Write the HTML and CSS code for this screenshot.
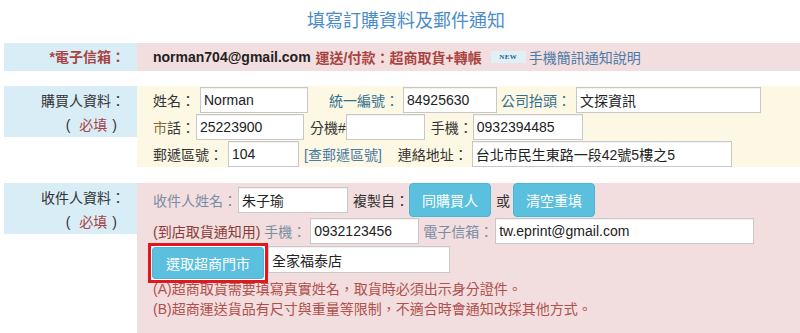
FILE: index.html
```html
<!DOCTYPE html>
<html lang="zh-Hant">
<head>
<meta charset="utf-8">
<title>填寫訂購資料及郵件通知</title>
<link rel="stylesheet" href="styles.css">
</head>
<body>
<div class="page">
  <h1 class="title">填寫訂購資料及郵件通知</h1>

  <div class="row row-email">
    <div class="label label-strong">*電子信箱：</div>
    <div class="cell cell-danger cell-email">
      <b class="email">norman704@gmail.com</b>
      <b class="ship">運送/付款：超商取貨+轉帳</b>
      <span class="new">NEW</span>
      <a class="link sms">手機簡訊通知說明</a>
    </div>
  </div>

  <div class="row">
    <div class="label label-block">購買人資料：<br><span class="must">(<span class="req">必填</span>)</span></div>
    <div class="cell cell-warning">
      <div class="line">
        <span class="lab">姓名：</span><input class="inp w-name" value="Norman">
        <span class="lab info gap21">統一編號：</span><input class="inp w-tax" value="84925630">
        <span class="lab info gap4">公司抬頭：</span><input class="inp w-co" value="文探資訊">
      </div>
      <div class="line">
        <span class="lab"><span class="warn">市</span>話：</span><input class="inp w-tel" value="25223900">
        <span class="lab gap6">分機#</span><input class="inp w-ext" value="">
        <span class="lab gap6">手機：</span><input class="inp w-mob" value="0932394485">
      </div>
      <div class="line">
        <span class="lab">郵遞區號：</span><input class="inp w-zip" value="104">
        <a class="link gap5">[查郵遞區號]</a>
        <span class="lab gap16">連絡地址：</span><input class="inp w-addr" value="台北市民生東路一段42號5樓之5">
      </div>
    </div>
  </div>

  <div class="row">
    <div class="label label-block">收件人資料：<br><span class="must">(<span class="req">必填</span>)</span></div>
    <div class="cell cell-danger cell-recv">
      <div class="line line-btn">
        <span class="lab muted">收件人姓名：</span><input class="inp w-rname" value="朱子瑜">
        <span class="lab gap5">複製自：</span><button class="btn">同購買人</button>
        <span class="lab gap5 or">或</span><button class="btn">清空重填</button>
      </div>
      <div class="line line-2">
        <span class="lab"><span class="brown">(到店取貨通知用)</span> <span class="muted">手機：</span></span><input class="inp w-rmob" value="0932123456">
        <span class="lab muted gap4">電子信箱：</span><input class="inp w-rmail" value="tw.eprint@gmail.com">
      </div>
      <div class="line line-3">
        <span class="store-frame"><button class="btn btn-store">選取超商門市</button></span><input class="inp w-store" value="全家福泰店">
      </div>
      <p class="note">(A)超商取貨需要填寫真實姓名，取貨時必須出示身分證件。</p>
      <p class="note">(B)超商運送貨品有尺寸與重量等限制，不適合時會通知改採其他方式。</p>
    </div>
  </div>
</div>
</body>
</html>
```

FILE: styles.css
```css
* { box-sizing: border-box; }
html, body { margin: 0; padding: 0; background: #fff; }
body {
  font-family: "Liberation Sans", "Noto Sans CJK TC", sans-serif;
  font-size: 14px;
  color: #333;
  overflow: hidden;
}
.page { padding-left: 4px; width: 804px; }
.title {
  margin: 0;
  height: 43px;
  line-height: 43px;
  text-align: center;
  font-size: 18px;
  font-weight: normal;
  color: #4a8cc8;
  padding-left: 4px;
}
.row { display: flex; align-items: flex-start; margin-bottom: 15px; }
.row + .row { margin-bottom: 16px; }
.label {
  width: 133px;
  flex: none;
  background: #d9edf7;
  text-align: right;
  padding-right: 12px;
  color: #333;
}
.label-strong {
  height: 28px;
  line-height: 28px;
  color: #a94442;
  font-weight: bold;
}
.label-block { padding-top: 3px; line-height: 24px; }
.must { display: inline-block; margin-right: 8px; }
.req { color: #a94442; margin: 0 5px 0 9px; }
.cell { flex: 1; padding-left: 16px; }
.cell-danger { background: #f2dede; }
.cell-warning { background: #fcf8e3; }
.cell-email {
  height: 28px;
  display: flex;
  align-items: center;
  white-space: nowrap;
}
.email { color: #222; }
.ship { color: #a94442; margin-left: 5px; }
.new {
  display: inline-block;
  margin-left: 9px;
  width: 35px;
  height: 12px;
  line-height: 12px;
  background: #dff1f7;
  color: #1f5c8a;
  font-family: "Liberation Serif", serif;
  font-size: 7px;
  font-weight: bold;
  text-align: center;
  letter-spacing: 0.3px;
}
.link { color: #4a7aa8; text-decoration: none; }
.sms { margin-left: 3px; }

.line { display: flex; align-items: center; height: 27px; white-space: nowrap; }
.lab { flex: none; }
.info { color: #31708f; }
.warn { color: #8a6d3b; }
.muted { color: #7a8ca4; }
.brown { color: #8a3b3b; }
.gap4 { margin-left: 4px; }
.gap5 { margin-left: 5px; }
.gap6 { margin-left: 6px; }
.gap16 { margin-left: 16px; }
.gap21 { margin-left: 21px; }

.inp {
  flex: none;
  height: 26px;
  border: 1px solid #c8c8c8;
  box-shadow: inset 0 1px 1px rgba(0,0,0,0.06);
  background: #fff;
  font-family: "Liberation Sans", "Noto Sans CJK TC", sans-serif;
  font-size: 14px;
  color: #222;
  padding: 0 3px;
  margin: 0;
  outline: none;
}
.w-name { width: 108px; margin-left: 5px; }
.w-tax { width: 94px; margin-left: 4px; }
.w-co { width: 185px; margin-left: 5px; }
.w-tel { width: 108px; margin-left: 1px; }
.w-ext { width: 79px; }
.w-mob { width: 110px; }
.w-zip { width: 71px; margin-left: 5px; }
.w-addr { width: 260px; margin-left: 4px; }

.cell-recv { padding-bottom: 20px; }
.line-btn { height: 34px; }
.w-rname { width: 110px; margin-left: 1px; }
.btn {
  flex: none;
  height: 34px;
  padding: 0 12px;
  background: #5bc0de;
  border: 1px solid #46b8da;
  border-radius: 4px;
  color: #fff;
  font-family: "Liberation Sans", "Noto Sans CJK TC", sans-serif;
  font-size: 14px;
  margin: 0;
}
.or { margin-right: 3px; }
.line-2 { height: 26px; margin-top: 1px; }
.w-rmob { width: 109px; margin-left: 4px; }
.w-rmail { width: 259px; margin-left: 2px; }
.line-3 { height: 33px; margin-top: 2px; align-items: flex-start; }
.store-frame {
  flex: none;
  display: flex;
  margin: -3px 0 0 -5px;
  border: 3px solid #e3161b;
  padding: 1px;
  background: #fff;
}
.btn-store {
  width: 112px;
  height: 32px;
  border-radius: 3px;
}
.w-store { width: 182px; margin-left: 0; height: 27px; }
.note {
  margin: 0;
  line-height: 20px;
  color: #b0504c;
}
```
